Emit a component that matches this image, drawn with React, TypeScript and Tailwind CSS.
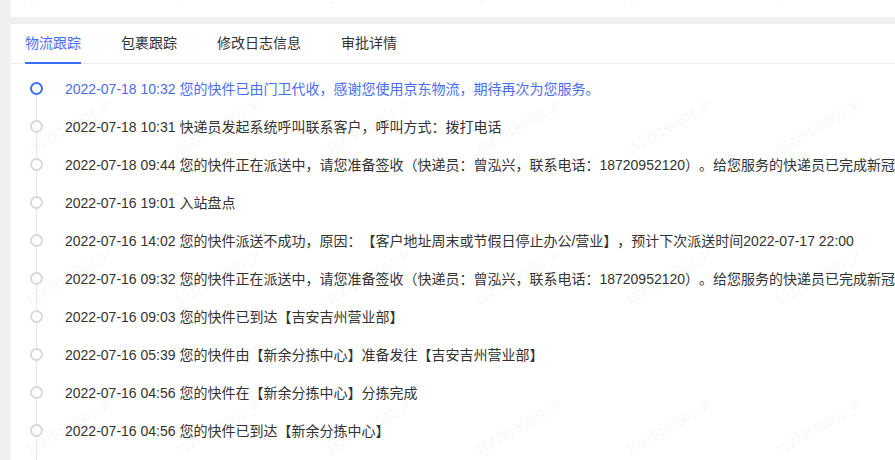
import React, { useState } from 'react';

const tabs = ['物流跟踪', '包裹跟踪', '修改日志信息', '审批详情'];

const traces = [
  { time: '2022-07-18 10:32', text: '您的快件已由门卫代收，感谢您使用京东物流，期待再次为您服务。' },
  { time: '2022-07-18 10:31', text: '快递员发起系统呼叫联系客户，呼叫方式：拨打电话' },
  { time: '2022-07-18 09:44', text: '您的快件正在派送中，请您准备签收（快递员：曾泓兴，联系电话：18720952120）。给您服务的快递员已完成新冠疫苗接种，请放心收件' },
  { time: '2022-07-16 19:01', text: '入站盘点' },
  { time: '2022-07-16 14:02', text: '您的快件派送不成功，原因：【客户地址周末或节假日停止办公/营业】，预计下次派送时间2022-07-17 22:00' },
  { time: '2022-07-16 09:32', text: '您的快件正在派送中，请您准备签收（快递员：曾泓兴，联系电话：18720952120）。给您服务的快递员已完成新冠疫苗接种，请放心收件' },
  { time: '2022-07-16 09:03', text: '您的快件已到达【吉安吉州营业部】' },
  { time: '2022-07-16 05:39', text: '您的快件由【新余分拣中心】准备发往【吉安吉州营业部】' },
  { time: '2022-07-16 04:56', text: '您的快件在【新余分拣中心】分拣完成' },
  { time: '2022-07-16 04:56', text: '您的快件已到达【新余分拣中心】' },
  { time: '2022-07-16 01:12', text: '您的快件已发车' },
];

// watermark grid: bottom-left anchor of each label
const marks: { x: number; y: number }[] = [];
for (let r = 0; r < 4; r++) {
  for (let c = 0; c < 6; c++) {
    marks.push({ x: 30 + c * 150, y: 7 + r * 150 });
  }
}

export default function App() {
  const [active, setActive] = useState(0);

  return (
    <div className="relative h-[460px] w-full overflow-hidden bg-[#f0f0f0] pl-[11px] font-['Liberation_Sans','Noto_Sans_CJK_SC',sans-serif] text-[14px] text-[#333] [text-spacing-trim:space-all]">
      {/* top card remainder */}
      <div className="h-[17px] bg-white" />

      <div className="mt-[7px] bg-white">
        {/* tabs */}
        <div className="flex gap-[40px] border-b border-[#ebebeb] pl-[14px]">
          {tabs.map((tab, i) => (
            <button
              key={tab}
              onClick={() => setActive(i)}
              className={`relative h-[39px] cursor-pointer whitespace-nowrap leading-[39px] ${
                active === i ? 'text-[#4a6cf2]' : 'text-[#333]'
              }`}
            >
              {tab}
              {active === i && <span className="absolute bottom-[-1px] left-0 right-0 h-[2px] bg-[#3a6df3]" />}
            </button>
          ))}
        </div>

        {/* timeline */}
        <div className="pt-[6px]">
          {traces.map((item, i) => {
            const first = i === 0;
            return (
              <div key={i} className="flex h-[38px]">
                <div className="flex w-[51px] shrink-0 flex-col items-center">
                  <div className={`h-[12px] w-px ${first ? 'bg-transparent' : 'bg-[#e6e6e6]'}`} />
                  <div
                    className={`h-[13px] w-[13px] shrink-0 rounded-full border-2 bg-white ${
                      first ? 'border-[#3d6df2]' : 'border-[#d9d9d9]'
                    }`}
                  />
                  <div className="w-px flex-1 bg-[#e6e6e6]" />
                </div>
                <div
                  className={`flex items-center overflow-hidden whitespace-nowrap pl-[3px] ${
                    first ? 'text-[#4a6cf2]' : 'text-[#333]'
                  }`}
                >
                  {item.time} {item.text}
                </div>
              </div>
            );
          })}
        </div>
      </div>

      {/* watermark overlay */}
      <div className="pointer-events-none absolute inset-0">
        {marks.map((m, i) => (
          <span
            key={i}
            className="absolute origin-bottom-left -rotate-30 whitespace-nowrap text-[13px] leading-[13px] text-black/[0.06]"
            style={{ left: m.x, top: m.y - 13 }}
          >
            15279190501_P
          </span>
        ))}
      </div>
    </div>
  );
}
